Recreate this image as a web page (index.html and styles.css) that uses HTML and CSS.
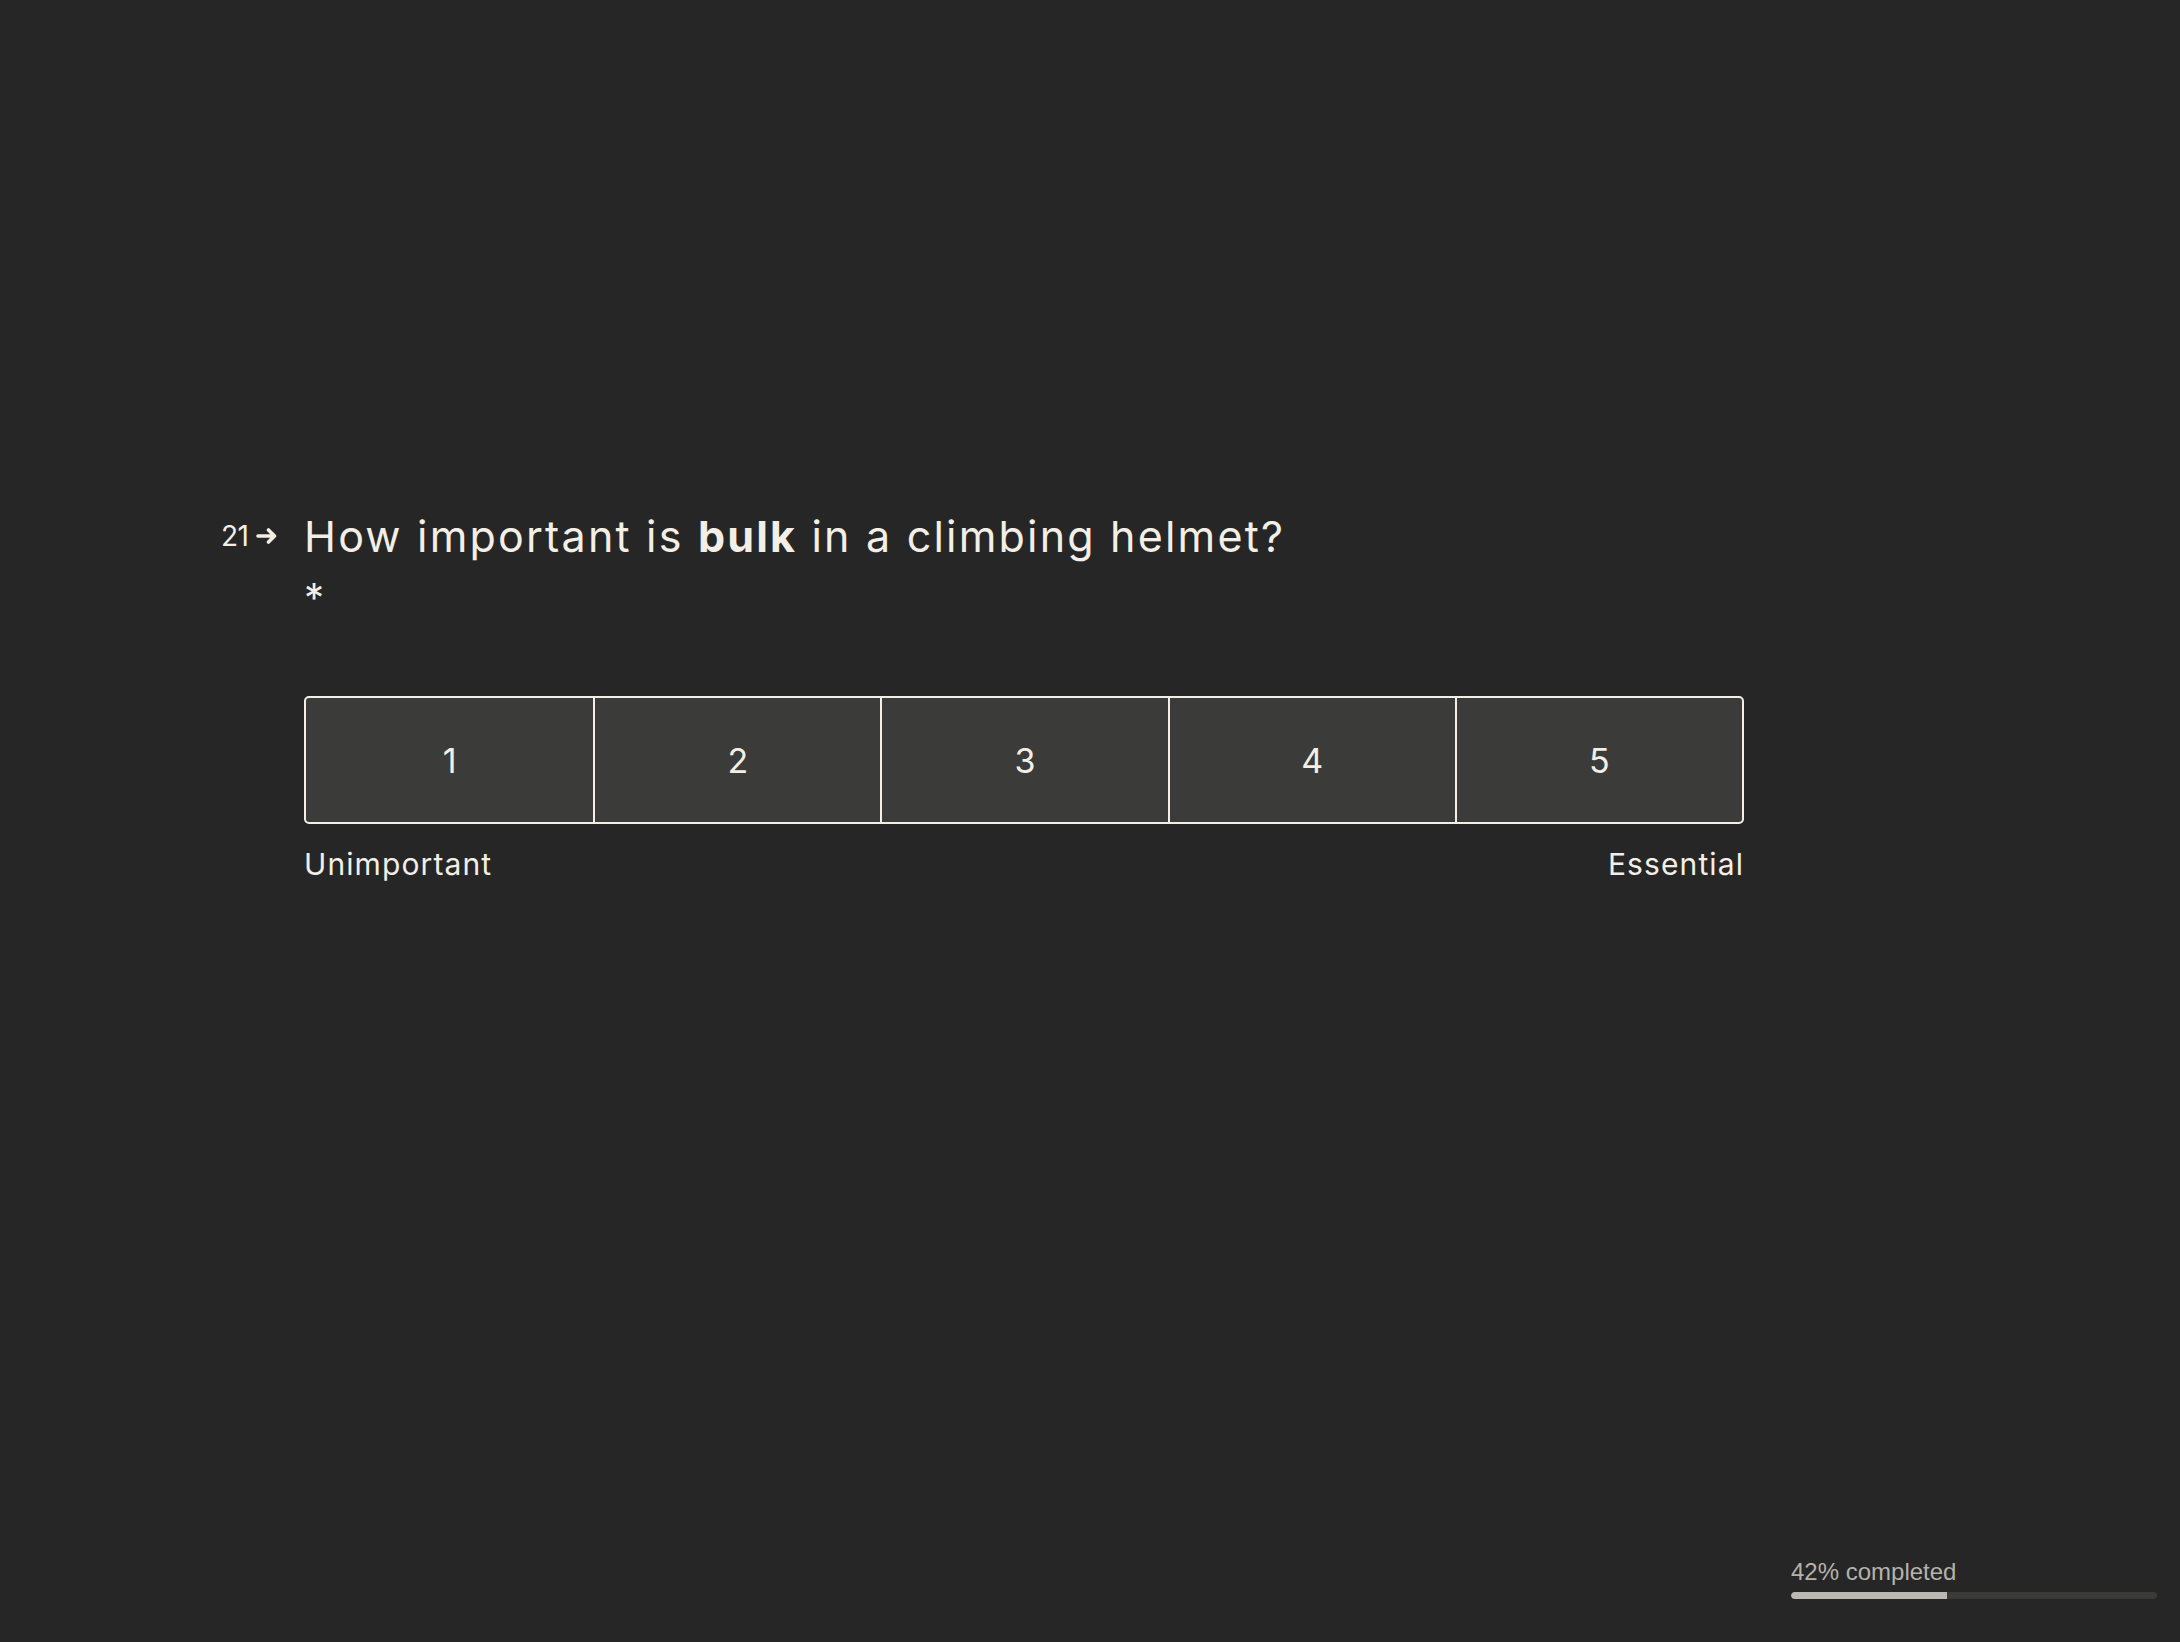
FILE: index.html
```html
<!DOCTYPE html>
<html lang="en">
<head>
<meta charset="utf-8">
<title>Survey question 21</title>
<link rel="stylesheet" href="styles.css">
</head>
<body>
<main class="page">
  <section class="question">
    <div class="qnum">
      <span class="qnum-text">21</span>
      <svg class="qnum-arrow" width="22" height="16" viewBox="0 0 22 16" aria-hidden="true">
        <path d="M2 8 H18.5 M12.5 2 L18.5 8 L12.5 14" fill="none" stroke="#f3efe7" stroke-width="3.6" stroke-linecap="round" stroke-linejoin="round"/>
      </svg>
    </div>
    <div class="qbody">
      <h1 class="qtitle">How important is <strong>bulk</strong> in a climbing helmet?</h1>
      <div class="qreq">*</div>
      <div class="scale">
        <button class="cell">1</button>
        <button class="cell">2</button>
        <button class="cell">3</button>
        <button class="cell">4</button>
        <button class="cell">5</button>
      </div>
      <div class="scale-labels">
        <span>Unimportant</span>
        <span>Essential</span>
      </div>
    </div>
  </section>
</main>
<footer class="progress">
  <div class="progress-text">42% completed</div>
  <div class="progress-track"><div class="progress-fill" style="width: 42.6%"></div></div>
</footer>
</body>
</html>
```
FILE: styles.css
```css
* { box-sizing: border-box; }
html, body { margin: 0; padding: 0; }
body {
  width: 2180px;
  height: 1642px;
  background: #262626;
  color: #f3efe7;
  font-family: "Inter", "Open Sans", sans-serif;
  display: flex;
  flex-direction: column;
  overflow: hidden;
}
.page {
  flex: 1;
  padding: 504px 0 0 221px;
}
.question {
  display: flex;
  align-items: flex-start;
}
.qnum {
  width: 83px;
  height: 64.5px;
  display: flex;
  align-items: center;
  font-size: 28px;
  line-height: 64.5px;
}
.qnum-text { letter-spacing: -0.5px; }
.qnum-arrow { margin-left: 8px; }
.qbody { width: 1440px; }
.qtitle {
  margin: 0;
  font-size: 43px;
  font-weight: 400;
  line-height: 64.5px;
  letter-spacing: 2.2px;
}
.qtitle strong { font-weight: 700; }
.qreq {
  font-size: 40px;
  line-height: 64.5px;
  margin-top: -3px;
}
.scale {
  margin-top: 66px;
  display: grid;
  grid-template-columns: repeat(5, 1fr);
  height: 128px;
  border: 2px solid #f3efe7;
  border-radius: 5px;
  overflow: hidden;
  background: #3b3b39;
}
.cell {
  border: 0;
  border-left: 2px solid #f3efe7;
  background: transparent;
  color: #f3efe7;
  font-family: inherit;
  font-size: 34px;
  padding: 0;
  display: flex;
  align-items: center;
  justify-content: center;
}
.cell:first-child { border-left: 0; }
.scale-labels {
  margin-top: 22px;
  display: flex;
  justify-content: space-between;
  font-size: 30px;
  line-height: 36px;
  letter-spacing: 1.1px;
}
.progress {
  align-self: flex-end;
  width: 366px;
  margin: 0 23px 43px 0;
  font-family: "Liberation Sans", Arial, sans-serif;
}
.progress-text {
  font-size: 24px;
  line-height: 28px;
  color: #b5b2ac;
}
.progress-track {
  margin-top: 6px;
  height: 7px;
  border-radius: 4px;
  background: #3a3a38;
  overflow: hidden;
}
.progress-fill {
  height: 100%;
  background: #bcb9b2;
  border-radius: 4px 0 0 4px;
}
```
